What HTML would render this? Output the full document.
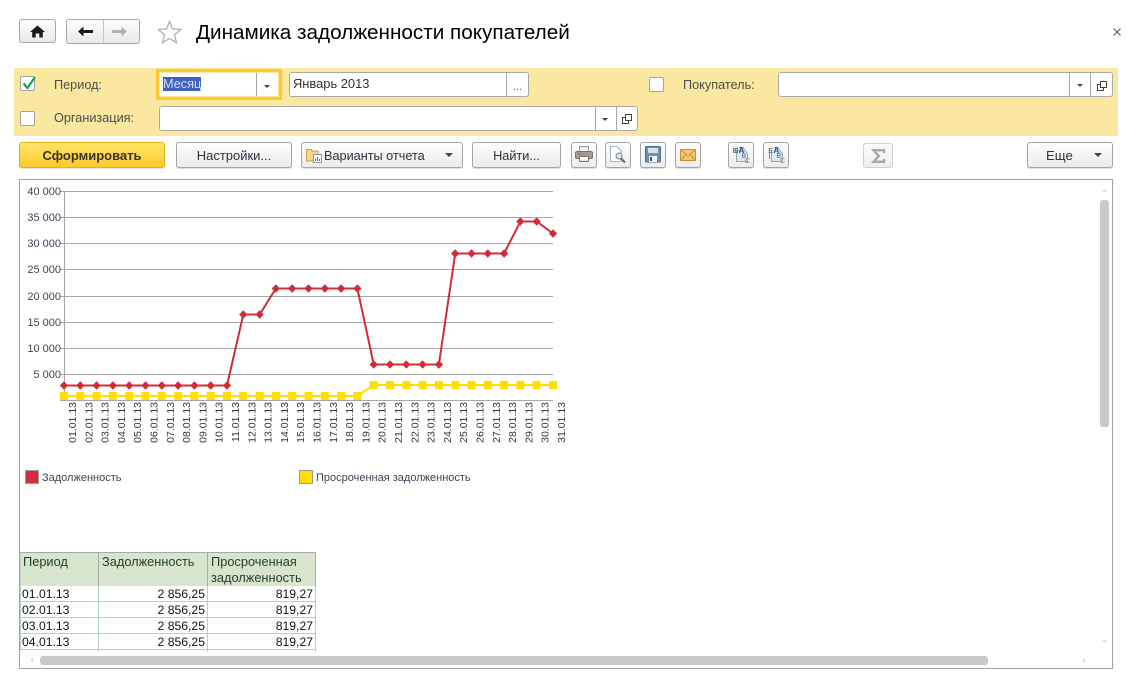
<!DOCTYPE html>
<html lang="ru"><head><meta charset="utf-8"><title>Динамика задолженности покупателей</title>
<style>
html,body{margin:0;padding:0;background:#fff}
body{width:1139px;height:683px;position:relative;overflow:hidden;font-family:"Liberation Sans",Arial,sans-serif;font-size:12px;color:#333}
.a{position:absolute;box-sizing:border-box}
.btn{position:absolute;box-sizing:border-box;height:26px;top:142px;border:1px solid #a5a5a5;border-radius:3px;background:linear-gradient(#fdfdfd,#ececec);text-align:center;line-height:26px;font-size:12.7px;color:#2f2f3f;box-shadow:0 1px 0 #ddd}
.fld{position:absolute;box-sizing:border-box;height:25px;background:#fff;border:1px solid #a8a8a8;border-radius:3px}
.sep{position:absolute;top:0;bottom:0;width:1px;background:#a8a8a8}
.cb{position:absolute;box-sizing:border-box;width:15px;height:15px;background:#fff;border:1px solid #a3a3a3;border-radius:2px}
.lb{position:absolute;font-size:12.7px;color:#4c4c4c;line-height:14px;white-space:nowrap}
.dd{position:absolute;width:0;height:0;border-left:3px solid transparent;border-right:3px solid transparent;border-top:3px solid #444}
.vh{position:absolute;white-space:nowrap}
.h{font-size:12.8px;line-height:16px;color:#24402e}
.c{font-size:12.2px;line-height:16px;color:#111}
svg{position:absolute;overflow:visible}
</style></head><body>

<!-- top nav -->
<div class="a" style="left:19px;top:19px;width:37px;height:24px;border:1px solid #a8a8a8;border-radius:3px;background:linear-gradient(#fdfdfd,#e9e9e9)"></div>
<svg style="left:30px;top:25px" width="16" height="13" viewBox="0 0 16 13"><path d="M7.5 0.5 L15 7 H12.8 V12.5 H9.3 V8.5 H5.7 V12.5 H2.2 V7 H0 Z" fill="#1c1c1c"/></svg>
<div class="a" style="left:66px;top:19px;width:74px;height:25px;border:1px solid #a8a8a8;border-radius:3px;background:linear-gradient(#fdfdfd,#e9e9e9)"><div class="sep" style="left:36px;background:#c8c8c8"></div></div>
<svg style="left:78px;top:26px" width="15" height="11" viewBox="0 0 15 11"><path d="M0 5.5 L5.500 0.500 V4 H15 V7 H5.500 V10.500 Z" fill="#1c1c1c"/></svg>
<svg style="left:112px;top:26px" width="15" height="11" viewBox="0 0 15 11"><path d="M15 5.500 L9.500 0.500 V4 H0 V7 H9.500 V10.500 Z" fill="#b2b2b2"/></svg>
<svg style="left:157px;top:20px" width="25" height="24" viewBox="0 0 25 24"><path d="M12.5 1.5 L15.6 9 L23.7 9.6 L17.5 14.8 L19.5 22.7 L12.5 18.4 L5.5 22.7 L7.5 14.8 L1.3 9.6 L9.4 9 Z" fill="#fff" stroke="#b5b5b5" stroke-width="1.4"/></svg>
<div class="vh" style="left:196px;top:21px;font-size:20.7px;line-height:24px;color:#000">Динамика задолженности покупателей</div>
<svg style="left:1113px;top:28px" width="8" height="8" viewBox="0 0 8 8"><path d="M.5 .5 L7.500 7.500 M7.500 .5 L.5 7.500" stroke="#555" stroke-width="1" fill="none"/></svg>

<!-- filter panel -->
<div class="a" style="left:14px;top:68px;width:1104px;height:68px;background:#fbe8a0"></div>
<div class="cb" style="left:20px;top:76px"></div>
<svg style="left:22px;top:76px" width="15" height="15" viewBox="0 0 15 15"><path d="M1.5 7.5 L5.5 12 L13 1" fill="none" stroke="#17a14a" stroke-width="2.2"/></svg>
<div class="lb" style="left:54px;top:78px">Период:</div>
<div class="cb" style="left:20px;top:111px"></div>
<div class="lb" style="left:54px;top:111px">Организация:</div>

<div class="a" style="left:156px;top:69px;width:126px;height:31px;background:#fff;border:3px solid #fdc92e;box-shadow:inset 0 0 0 1px #fbe8a0"></div>
<div class="a" style="left:256px;top:73px;width:1px;height:23px;background:#a8a8a8"></div>
<div class="a" style="left:163px;top:77px;width:38px;height:14px;background:#3f60bd"></div>
<div class="vh" style="left:163px;top:77px;font-size:12.7px;line-height:14px;color:#d5dcf2">Месяц</div>
<div class="dd" style="left:264px;top:85px"></div>

<div class="fld" style="left:289px;top:72px;width:240px"><div class="sep" style="left:216px"></div></div>
<div class="vh" style="left:293px;top:77px;font-size:12.9px;line-height:14px;color:#333">Январь 2013</div>
<div class="vh" style="left:513px;top:80px;font-size:11px;line-height:14px;color:#666">...</div>

<div class="fld" style="left:159px;top:106px;width:479px"><div class="sep" style="left:435px"></div><div class="sep" style="left:456px"></div></div>
<div class="dd" style="left:602px;top:118px"></div>
<svg style="left:622px;top:114px" width="10" height="10" viewBox="0 0 10 10"><path d="M3.5 .5H9.5V6.5H3.5ZM3.5 3.5H.5V9.5H6.5V6.5" fill="none" stroke="#444"/></svg>

<div class="cb" style="left:649px;top:77px"></div>
<div class="lb" style="left:683px;top:78px">Покупатель:</div>
<div class="fld" style="left:778px;top:72px;width:335px"><div class="sep" style="left:290px"></div><div class="sep" style="left:311px"></div></div>
<div class="dd" style="left:1077px;top:84px"></div>
<svg style="left:1097px;top:81px" width="10" height="10" viewBox="0 0 10 10"><path d="M3.5 .5H9.5V6.5H3.5ZM3.5 3.5H.5V9.5H6.5V6.5" fill="none" stroke="#444"/></svg>

<!-- toolbar -->
<div class="btn" style="left:19px;width:146px;border-color:#e5b21a;background:linear-gradient(#fee666,#fcc92b);font-weight:bold;color:#3a3320;font-size:13px">Сформировать</div>
<div class="btn" style="left:176px;width:116px;font-size:13px">Настройки...</div>
<div class="btn" style="left:301px;width:162px;text-align:left;padding-left:22px">Варианты отчета</div>
<svg style="left:306px;top:147px" width="16" height="16" viewBox="0 0 16 16"><path d="M.5 2.5H5L6.5 4H12V14H.5Z" fill="#f5d788" stroke="#c9a24a"/><rect x="7.5" y="7.5" width="8" height="8" fill="#fff" stroke="#8a9ab0"/><path d="M9.5 14V11.5M11.5 14V10M13.5 14V12" stroke="#c04040"/></svg>
<div class="dd" style="left:445px;top:153px;border-left-width:4px;border-right-width:4px;border-top-width:4px"></div>
<div class="btn" style="left:472px;width:89px">Найти...</div>

<div class="btn" style="left:571px;width:26px"></div>
<svg style="left:575px;top:146px" width="18" height="17" viewBox="0 0 18 17"><rect x="4.5" y=".5" width="9" height="6" fill="#eee" stroke="#9a9a9a"/><rect x=".5" y="5.5" width="17" height="7" rx="1.5" fill="#a89c90" stroke="#7d746c"/><path d="M3 8h2" stroke="#d33"/><path d="M6 8h2" stroke="#3a3"/><rect x="4.5" y="10.5" width="9" height="5" fill="#fff" stroke="#777"/></svg>
<div class="btn" style="left:605px;width:26px"></div>
<svg style="left:610px;top:146px" width="17" height="18" viewBox="0 0 17 18"><path d="M.5.5H7L11 4.5V15.5H.5Z" fill="#fff" stroke="#9fb4cc"/><circle cx="9" cy="10" r="3" fill="#d6e6f4" stroke="#6a7f99"/><path d="M11 12.5L15 16.5" stroke="#8a5a3a" stroke-width="2"/></svg>
<div class="btn" style="left:640px;width:26px"></div>
<svg style="left:645px;top:146px" width="16" height="17" viewBox="0 0 16 17"><rect x=".5" y=".5" width="15" height="15.5" rx="1" fill="#6f8fb3" stroke="#4f6b8b"/><rect x="3" y="2" width="10" height="5" fill="#d5e1ec"/><rect x="4" y="10" width="8" height="6" fill="#eef2f5"/><rect x="5" y="11" width="2" height="4" fill="#3f5872"/></svg>
<div class="btn" style="left:675px;width:26px"></div>
<svg style="left:680px;top:149px" width="16" height="12" viewBox="0 0 16 12"><rect x=".5" y=".5" width="15" height="11" fill="#f2c667" stroke="#c9923a"/><path d="M.5 .5L8 7L15.5 .5M.5 11.5L6 5.5M15.5 11.5L10 5.5" fill="none" stroke="#c9923a"/></svg>

<div class="btn" style="left:728px;width:26px"></div>
<svg style="left:733px;top:146px" width="17" height="18" viewBox="0 0 17 18"><path d="M3.500 4.500V15.500H14.500V8L10 1.500H6" fill="#dce8f5" stroke="#8fa6bf"/><path d="M.5 2.500h4v4h-4zM2.500 2.500v4M.5 4.500h4" fill="none" stroke="#666" stroke-width=".8"/><text x="5.500" y="7" font-size="8" font-weight="bold" fill="#234a8a" font-family="Liberation Sans">A</text><text x="8.500" y="12" font-size="7" fill="#666" font-family="Liberation Sans">B</text><text x="12" y="17" font-size="7" fill="#777" font-family="Liberation Sans">C</text></svg>
<div class="btn" style="left:763px;width:26px"></div>
<svg style="left:768px;top:146px" width="17" height="18" viewBox="0 0 17 18"><path d="M3.500 4.500V15.500H14.500V8L10 1.500H6" fill="#dce8f5" stroke="#8fa6bf"/><path d="M.5 2.500h4M.5 4.500h4M.5 6.500h4M1.500 2.500V13" fill="none" stroke="#666" stroke-width=".8"/><text x="5.500" y="7" font-size="8" font-weight="bold" fill="#234a8a" font-family="Liberation Sans">A</text><text x="8.500" y="12" font-size="7" fill="#666" font-family="Liberation Sans">B</text><text x="12" y="17" font-size="7" fill="#777" font-family="Liberation Sans">C</text></svg>

<div class="btn" style="left:863px;top:143px;height:25px;width:30px;border-color:#d0d0d0;background:linear-gradient(#fafafa,#f0f0f0);box-shadow:none"></div>
<svg style="left:872px;top:149px" width="13" height="14" viewBox="0 0 13 14"><path d="M12 4V1.200H1.500L6.800 7L1.500 12.800H12V10" fill="none" stroke="#a8a8a8" stroke-width="2.400"/></svg>
<div class="btn" style="left:1027px;width:86px;text-align:left;padding-left:18px;font-size:13.2px">Еще</div>
<div class="dd" style="left:1094px;top:153px;border-left-width:4px;border-right-width:4px;border-top-width:4px"></div>

<!-- report frame -->
<div class="a" style="left:19px;top:179px;width:1094px;height:490px;border:1px solid #a3a3a3;background:#fff"></div>

<svg style="left:0;top:0" width="1139" height="683" viewBox="0 0 1139 683" font-family="Liberation Sans">
<defs>
<marker id="r" markerUnits="userSpaceOnUse" markerWidth="10" markerHeight="10" refX="5" refY="5"><path d="M5 .8L9.200 5L5 9.200L.8 5Z" fill="#d12c3c"/></marker>
<marker id="y" markerUnits="userSpaceOnUse" markerWidth="10" markerHeight="10" refX="5" refY="5"><rect x="1" y="1" width="8" height="8" fill="#ffdf00"/></marker>
</defs>
<g stroke="#a8a8a8" stroke-width="1" fill="none" shape-rendering="crispEdges">
<path d="M60 191.500H553M60 217.500H553M60 243.500H553M60 269.500H553M60 296.500H553M60 322.500H553M60 348.500H553M60 374.500H553M60 400.500H553M64.500 191V400"/>
</g>
<g fill="#3c4456" text-anchor="end" font-size="11">
<text x="61" y="195">40 000</text><text x="61" y="221">35 000</text><text x="61" y="247">30 000</text><text x="61" y="273">25 000</text><text x="61" y="300">20 000</text><text x="61" y="326">15 000</text><text x="61" y="352">10 000</text><text x="61" y="378">5 000</text>
</g>
<polyline fill="none" stroke="#ffdf00" stroke-width="2" marker-start="url(#y)" marker-mid="url(#y)" marker-end="url(#y)" points="64,396 80.300,396 96.600,396 112.900,396 129.200,396 145.500,396 161.800,396 178.100,396 194.400,396 210.700,396 227,396 243.300,396 259.600,396 275.900,396 292.200,396 308.500,396 324.800,396 341.100,396 357.400,396 373.700,385 390,385 406.300,385 422.600,385 438.900,385 455.200,385 471.500,385 487.800,385 504.100,385 520.400,385 536.700,385 553,385"/>
<polyline fill="none" stroke="#d12c3c" stroke-width="2" marker-start="url(#r)" marker-mid="url(#r)" marker-end="url(#r)" points="64,385.500 80.300,385.500 96.600,385.500 112.900,385.500 129.200,385.500 145.500,385.500 161.800,385.500 178.100,385.500 194.400,385.500 210.700,385.500 227,385.500 243.300,314.500 259.600,314.500 275.900,288.500 292.200,288.500 308.500,288.500 324.800,288.500 341.100,288.500 357.400,288.500 373.700,364.500 390,364.500 406.300,364.500 422.600,364.500 438.900,364.500 455.200,253.500 471.500,253.500 487.800,253.500 504.100,253.500 520.400,221.500 536.700,221.500 553,233.500"/>
<g fill="#2f3646" text-anchor="end" font-size="10.500">
<text transform="translate(76,402) rotate(-90)">01.01.13</text>
<text transform="translate(92.300,402) rotate(-90)">02.01.13</text>
<text transform="translate(108.600,402) rotate(-90)">03.01.13</text>
<text transform="translate(124.900,402) rotate(-90)">04.01.13</text>
<text transform="translate(141.200,402) rotate(-90)">05.01.13</text>
<text transform="translate(157.500,402) rotate(-90)">06.01.13</text>
<text transform="translate(173.800,402) rotate(-90)">07.01.13</text>
<text transform="translate(190.100,402) rotate(-90)">08.01.13</text>
<text transform="translate(206.400,402) rotate(-90)">09.01.13</text>
<text transform="translate(222.700,402) rotate(-90)">10.01.13</text>
<text transform="translate(239,402) rotate(-90)">11.01.13</text>
<text transform="translate(255.300,402) rotate(-90)">12.01.13</text>
<text transform="translate(271.600,402) rotate(-90)">13.01.13</text>
<text transform="translate(287.900,402) rotate(-90)">14.01.13</text>
<text transform="translate(304.200,402) rotate(-90)">15.01.13</text>
<text transform="translate(320.500,402) rotate(-90)">16.01.13</text>
<text transform="translate(336.800,402) rotate(-90)">17.01.13</text>
<text transform="translate(353.100,402) rotate(-90)">18.01.13</text>
<text transform="translate(369.400,402) rotate(-90)">19.01.13</text>
<text transform="translate(385.700,402) rotate(-90)">20.01.13</text>
<text transform="translate(402,402) rotate(-90)">21.01.13</text>
<text transform="translate(418.300,402) rotate(-90)">22.01.13</text>
<text transform="translate(434.600,402) rotate(-90)">23.01.13</text>
<text transform="translate(450.900,402) rotate(-90)">24.01.13</text>
<text transform="translate(467.200,402) rotate(-90)">25.01.13</text>
<text transform="translate(483.500,402) rotate(-90)">26.01.13</text>
<text transform="translate(499.800,402) rotate(-90)">27.01.13</text>
<text transform="translate(516.100,402) rotate(-90)">28.01.13</text>
<text transform="translate(532.400,402) rotate(-90)">29.01.13</text>
<text transform="translate(548.700,402) rotate(-90)">30.01.13</text>
<text transform="translate(565,402) rotate(-90)">31.01.13</text>
</g>
<rect x="25.500" y="470.500" width="13" height="13" fill="#d12c3c" stroke="#9a9a9a"/>
<text x="42" y="481" font-size="11" fill="#3c4456">Задолженность</text>
<rect x="299.500" y="470.500" width="13" height="13" fill="#ffdf00" stroke="#9a9a9a"/>
<text x="316" y="481" font-size="11" fill="#3c4456">Просроченная задолженность</text>
</svg>

<!-- table -->
<div class="a" style="left:20px;top:552px;width:296px;height:34px;background:#d8e4cc;border:1px solid #a8a8a8;border-bottom:0;border-left-color:#c4d4c4"></div>
<div class="a" style="left:98px;top:552px;width:1px;height:34px;background:#a8a8a8"></div>
<div class="a" style="left:207px;top:552px;width:1px;height:34px;background:#a8a8a8"></div>
<div class="vh h" style="left:23px;top:554px">Период</div>
<div class="vh h" style="left:102px;top:554px">Задолженность</div>
<div class="vh h" style="left:211px;top:554px">Просроченная<br>задолженность</div>
<div class="a" style="left:20px;top:601px;width:296px;height:1px;background:#b4d0c2"></div>
<div class="a" style="left:20px;top:617px;width:296px;height:1px;background:#b4d0c2"></div>
<div class="a" style="left:20px;top:633px;width:296px;height:1px;background:#b4d0c2"></div>
<div class="a" style="left:20px;top:649px;width:296px;height:1px;background:#b4d0c2"></div>
<div class="a" style="left:20px;top:586px;width:1px;height:64px;background:#b4d0c2"></div>
<div class="a" style="left:98px;top:586px;width:1px;height:66px;background:#b4d0c2"></div>
<div class="a" style="left:207px;top:586px;width:1px;height:66px;background:#b4d0c2"></div>
<div class="a" style="left:315px;top:586px;width:1px;height:66px;background:#b4d0c2"></div>
<div class="vh c" style="left:22px;top:586px">01.01.13</div>
<div class="vh c" style="left:22px;top:602px">02.01.13</div>
<div class="vh c" style="left:22px;top:618px">03.01.13</div>
<div class="vh c" style="left:22px;top:634px">04.01.13</div>
<div class="vh c" style="right:934px;top:586px">2 856,25</div>
<div class="vh c" style="right:934px;top:602px">2 856,25</div>
<div class="vh c" style="right:934px;top:618px">2 856,25</div>
<div class="vh c" style="right:934px;top:634px">2 856,25</div>
<div class="vh c" style="right:826px;top:586px">819,27</div>
<div class="vh c" style="right:826px;top:602px">819,27</div>
<div class="vh c" style="right:826px;top:618px">819,27</div>
<div class="vh c" style="right:826px;top:634px">819,27</div>

<!-- scrollbars -->
<div class="a" style="left:1100px;top:200px;width:9px;height:227px;background:#c9c9c9;border-radius:3px"></div>
<div class="a" style="left:40px;top:656px;width:948px;height:9px;background:#c9c9c9;border-radius:3px"></div>
<svg style="left:0;top:0" width="1139" height="683" viewBox="0 0 1139 683"><path d="M1102 192L1104.500 189L1107 192Z M1102 640L1104.500 643L1107 640Z M33 658L30 660.500L33 663Z M1083 658L1086 660.500L1083 663Z" fill="#dcdcdc"/></svg>
</body></html>
